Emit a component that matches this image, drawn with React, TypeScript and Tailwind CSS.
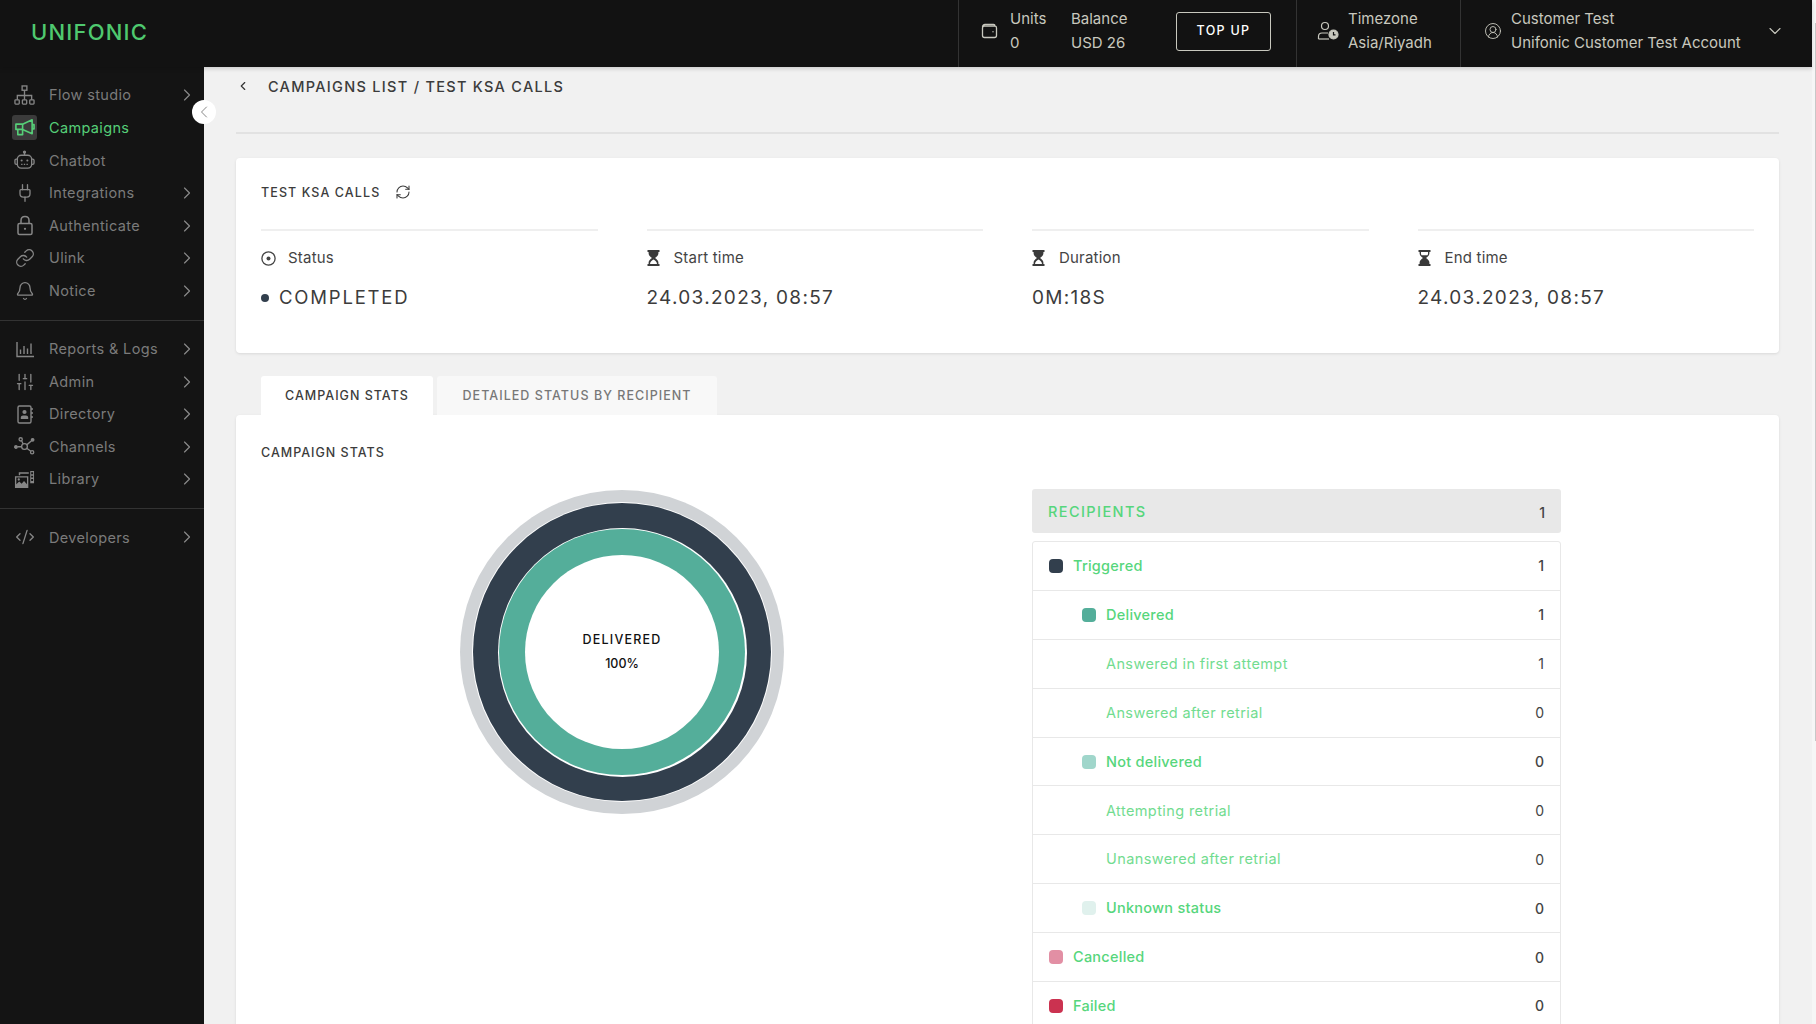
import {
  Bell,
  ChevronDown,
  ChevronLeft,
  ChevronRight,
  CircleUserRound,
  CodeXml,
  Link,
  Plug,
  RefreshCw,
  SlidersVertical,
} from "lucide-react";
import type { ReactNode } from "react";

const FlowIcon = () => (
  <svg width="21" height="21" viewBox="0 0 22 22" fill="none" stroke="currentColor" strokeWidth="1.4">
    <rect x="8.5" y="1" width="5" height="4.5" />
    <path d="M11 5.5V11M3.5 15.5V11H18.5V15.5M11 11V15.5" />
    <rect x="1" y="15.5" width="4.5" height="4.5" rx="0.8" />
    <rect x="8.8" y="15.5" width="4.5" height="4.5" rx="0.8" />
    <rect x="16.5" y="15.5" width="4.5" height="4.5" rx="0.8" />
  </svg>
);

const MegaphoneIcon = () => (
  <svg width="21" height="21" viewBox="0 0 22 22" fill="none" stroke="currentColor" strokeWidth="1.7" strokeLinejoin="round">
    <path d="M2 7.5H9L19 3V17.5L9 13H2Z" />
    <path d="M9 7.5V13M4 13V18.5H9V13" />
    <path d="M19 8H21V12.5H19" />
  </svg>
);

const RobotIcon = () => (
  <svg width="21" height="21" viewBox="0 0 22 22" fill="none" stroke="currentColor" strokeWidth="1.4">
    <rect x="3.5" y="5.5" width="15" height="13.5" rx="4" />
    <path d="M11 5.5V3" />
    <circle cx="11" cy="2.2" r="1" fill="currentColor" />
    <path d="M3.5 9.5H2.5C1.5 9.5 1 10.2 1 11V13.5C1 14.3 1.5 15 2.5 15H3.5M18.5 9.5H19.5C20.5 9.5 21 10.2 21 11V13.5C21 14.3 20.5 15 19.5 15H18.5" />
    <circle cx="8" cy="11" r="1.1" fill="currentColor" stroke="none" />
    <circle cx="14" cy="11" r="1.1" fill="currentColor" stroke="none" />
    <path d="M7.5 15H14.5" strokeDasharray="1.4 1.4" />
  </svg>
);

const LockIcon = () => (
  <svg width="20" height="21" viewBox="0 0 20 21" fill="none" stroke="currentColor" strokeWidth="1.5">
    <rect x="3" y="8.5" width="14" height="11" rx="1.5" />
    <path d="M6 8.5V5.5C6 3 7.8 1.5 10 1.5C12.2 1.5 14 3 14 5.5V8.5" />
    <circle cx="10" cy="13.8" r="1.1" fill="currentColor" stroke="none" />
  </svg>
);

const ReportsIcon = () => (
  <svg width="20" height="20" viewBox="0 0 20 20" fill="none" stroke="currentColor" strokeWidth="1.4">
    <path d="M2 3V17.5H19" />
    <path d="M5.5 15V10.5M9 15V7M12.5 15V9.5M16 15V4.5" />
  </svg>
);

const DirectoryIcon = () => (
  <svg width="20" height="21" viewBox="0 0 20 21" fill="none" stroke="currentColor" strokeWidth="1.4">
    <rect x="3" y="2" width="13" height="17" rx="1.5" />
    <circle cx="9.5" cy="8" r="2.1" fill="currentColor" stroke="none" />
    <path d="M5.8 15V13.6C5.8 12.4 6.8 11.5 8 11.5H11C12.2 11.5 13.2 12.4 13.2 13.6V15Z" fill="currentColor" stroke="none" />
    <path d="M16 5H18M16 9H18M16 13H18" />
  </svg>
);

const ChannelsIcon = () => (
  <svg width="21" height="21" viewBox="0 0 22 22" fill="none" stroke="currentColor" strokeWidth="1.4">
    <circle cx="11" cy="11" r="3" />
    <circle cx="7" cy="3.5" r="1.7" />
    <circle cx="19" cy="17" r="1.7" />
    <circle cx="19.5" cy="4" r="1.3" fill="currentColor" />
    <circle cx="2" cy="11.5" r="1.3" fill="currentColor" />
    <path d="M8 5L9.6 8.4M13.4 12.8L17.6 16M13.3 9.3L18.4 5M3.4 11.3H8" />
  </svg>
);

const LibraryIcon = () => (
  <svg width="21" height="21" viewBox="0 0 22 22" fill="currentColor">
    <path d="M5 3.5H15.5V5H6.5V6.5H5Z" />
    <path fillRule="evenodd" d="M1 7.5H15V20H1ZM2.4 9V16L5.5 13L8 15.5L10.5 12.5L13.6 16V9Z" />
    <circle cx="5" cy="11" r="1.2" />
    <path fillRule="evenodd" d="M17 2H21V15H17ZM18 3.5V5.5H20V3.5ZM18 7V9H20V7ZM18 10.5V12.5H20V10.5Z" />
  </svg>
);

const WalletIcon = () => (
  <svg width="17" height="16" viewBox="0 0 17 16" fill="none" stroke="currentColor" strokeWidth="1.3">
    <path d="M1.5 4C1.5 2.6 2.5 1.5 4 1.5H12.5C13.4 1.5 14 2.1 14 3.2H3.5C2.4 3.2 1.5 4 1.5 5V12.5C1.5 13.6 2.4 14.5 3.5 14.5H13.5C14.6 14.5 15.5 13.6 15.5 12.5V5C15.5 4 14.9 3.2 14 3.2" />
    <circle cx="12" cy="8.8" r="0.7" fill="currentColor" stroke="none" />
  </svg>
);

const TimezoneIcon = () => (
  <svg width="22" height="20" viewBox="0 0 22 20" fill="none" stroke="currentColor" strokeWidth="1.2">
    <circle cx="8" cy="5" r="3.5" />
    <path d="M1.5 18V15.5C1.5 13.5 3 12 5 12H11" />
    <path d="M1.5 18H12" />
    <circle cx="16.5" cy="13.5" r="4.5" fill="currentColor" />
    <path d="M16.5 11V13.8H18.5" stroke="#121212" />
  </svg>
);

const StatusIcon = () => (
  <svg width="15" height="15" viewBox="0 0 15 15" fill="none" stroke="currentColor" strokeWidth="1.3">
    <circle cx="7.5" cy="7.5" r="6.6" />
    <circle cx="7.5" cy="7.5" r="2" fill="currentColor" stroke="none" />
  </svg>
);

const Hourglass = ({ flip }: { flip?: boolean }) => (
  <svg width="13" height="16" viewBox="0 0 13 16" className="text-[#3a3a3a]" fill="currentColor">
    <path
      fillRule="evenodd"
      d="M0.5 0H12.5V2H11.4V3.5C11.4 5.5 9.4 7 8 8C9.4 9 11.4 10.5 11.4 12.5V14H12.5V16H0.5V14H1.6V12.5C1.6 10.5 3.6 9 5 8C3.6 7 1.6 5.5 1.6 3.5V2H0.5Z"
    />
    {flip ? (
      <path fill="#fff" d="M3 2H10V3.6C10 4.2 9.8 4.8 9.4 5.2H3.6C3.2 4.8 3 4.2 3 3.6Z" />
    ) : (
      <path fill="#fff" d="M6.5 9.4C5 10.4 3 11.6 3 14H10C10 11.6 8 10.4 6.5 9.4Z" />
    )}
  </svg>
);

type NavItem = {
  label: string;
  icon: ReactNode;
  arrow?: boolean;
  active?: boolean;
};

const iconProps = { size: 20, strokeWidth: 1.6 };

const topNav: NavItem[] = [
  { label: "Flow studio", icon: <FlowIcon />, arrow: true },
  { label: "Campaigns", icon: <MegaphoneIcon />, active: true },
  { label: "Chatbot", icon: <RobotIcon /> },
  { label: "Integrations", icon: <Plug {...iconProps} />, arrow: true },
  { label: "Authenticate", icon: <LockIcon />, arrow: true },
  { label: "Ulink", icon: <Link {...iconProps} />, arrow: true },
  { label: "Notice", icon: <Bell {...iconProps} />, arrow: true },
];

const midNav: NavItem[] = [
  { label: "Reports & Logs", icon: <ReportsIcon />, arrow: true },
  { label: "Admin", icon: <SlidersVertical {...iconProps} />, arrow: true },
  { label: "Directory", icon: <DirectoryIcon />, arrow: true },
  { label: "Channels", icon: <ChannelsIcon />, arrow: true },
  { label: "Library", icon: <LibraryIcon />, arrow: true },
];

const NavRow = ({ item }: { item: NavItem }) => (
  <div className="flex h-[32.6px] items-center pr-[7px] pl-[12px]">
    <div
      className={`flex h-[25px] w-[25px] items-center justify-center rounded-[3px] ${
        item.active ? "bg-[#3b3b3b] text-[#56cf78]" : "text-[#868686]"
      }`}
    >
      {item.icon}
    </div>
    <span
      className={`ml-[12px] flex-1 text-[14.5px] tracking-[0.35px] ${
        item.active ? "text-[#56cf78]" : "text-[#7b7b7b]"
      }`}
    >
      {item.label}
    </span>
    {item.arrow && <ChevronRight size={20} strokeWidth={1.4} className="text-[#8a8a8a]" />}
  </div>
);

const Sidebar = () => (
  <aside className="relative w-[204px] shrink-0 bg-[#141414]">
    <div className="pt-[12px] pb-[12.5px]">
      {topNav.map((item) => (
        <NavRow key={item.label} item={item} />
      ))}
    </div>
    <div className="border-t border-[#333] pt-[12px] pb-[12.5px]">
      {midNav.map((item) => (
        <NavRow key={item.label} item={item} />
      ))}
    </div>
    <div className="border-t border-[#333] pt-[12px]">
      <NavRow item={{ label: "Developers", icon: <CodeXml {...iconProps} />, arrow: true }} />
    </div>
    <div className="absolute top-[33px] right-[-12px] z-10 flex h-[24px] w-[24px] items-center justify-center rounded-full bg-white">
      <ChevronLeft size={20} strokeWidth={1.2} className="text-[#888]" />
    </div>
  </aside>
);

const Header = () => (
  <header className="relative z-20 flex h-[67px] shrink-0 items-stretch bg-[#121212] text-[#c8c8be] shadow-[0_2px_4px_rgba(0,0,0,0.15)]">
    <div className="flex w-[958px] shrink-0 items-center pb-[3px] pl-[31px]">
      <span className="text-[22px] leading-none font-medium tracking-[1.2px] text-[#4fc96f]">UNIFONIC</span>
    </div>
    <div className="flex w-[338px] shrink-0 items-center border-l border-[#333] pb-[5px] pl-[22px]">
      <WalletIcon />
      <div className="ml-[12px] w-[61px] text-[15px] leading-[24px]">
        <div>Units</div>
        <div>0</div>
      </div>
      <div className="w-[105px] text-[15px] leading-[24px]">
        <div>Balance</div>
        <div>USD 26</div>
      </div>
      <button className="flex h-[39px] w-[95px] items-center justify-center rounded-[3px] border border-[#c8c8be] text-[12.5px] font-medium tracking-[1.3px] text-white">
        TOP UP
      </button>
    </div>
    <div className="flex w-[164px] shrink-0 items-center border-l border-[#333] pb-[5px] pl-[20px]">
      <TimezoneIcon />
      <div className="ml-[9px] text-[15px] leading-[24px]">
        <div>Timezone</div>
        <div>Asia/Riyadh</div>
      </div>
    </div>
    <div className="flex flex-1 items-center border-l border-[#333] pb-[5px] pl-[23px]">
      <CircleUserRound size={18} strokeWidth={1.2} />
      <div className="ml-[9px] flex-1 text-[15px] leading-[24px]">
        <div>Customer Test</div>
        <div>Unifonic Customer Test Account</div>
      </div>
      <ChevronDown size={20} strokeWidth={1.3} className="mr-[27px]" />
    </div>
  </header>
);

const InfoColumn = ({
  icon,
  label,
  value,
  valueClass,
}: {
  icon: ReactNode;
  label: string;
  value: ReactNode;
  valueClass?: string;
}) => (
  <div className="border-t-2 border-[#efefef] pt-[17px]">
    <div className="flex h-[20px] items-center text-[15px] tracking-[0.2px] text-[#444]">
      <div className="flex w-[27px] items-center">{icon}</div>
      {label}
    </div>
    <div className={`mt-[16px] text-[#3c3c3c] ${valueClass ?? "text-[19px] tracking-[1.3px]"}`}>{value}</div>
  </div>
);

type StatRow = {
  label: string;
  value: number;
  swatch?: string;
  level: 0 | 1 | 2;
  bold?: boolean;
};

const statRows: StatRow[] = [
  { label: "Triggered", value: 1, swatch: "bg-[#323f4d]", level: 0, bold: true },
  { label: "Delivered", value: 1, swatch: "bg-[#54ae9a]", level: 1, bold: true },
  { label: "Answered in first attempt", value: 1, level: 2 },
  { label: "Answered after retrial", value: 0, level: 2 },
  { label: "Not delivered", value: 0, swatch: "bg-[#a0d6cb]", level: 1, bold: true },
  { label: "Attempting retrial", value: 0, level: 2 },
  { label: "Unanswered after retrial", value: 0, level: 2 },
  { label: "Unknown status", value: 0, swatch: "bg-[#e0f1ed]", level: 1, bold: true },
  { label: "Cancelled", value: 0, swatch: "bg-[#e28fa4]", level: 0, bold: true },
  { label: "Failed", value: 0, swatch: "bg-[#cb3250]", level: 0, bold: true },
];

const StatRowView = ({ row }: { row: StatRow }) => (
  <div className="flex h-[48.9px] shrink-0 items-center border-b border-[#e8e8e8] pr-[16px] pl-[16px]">
    {row.level === 1 && <div className="w-[33px]" />}
    {row.level === 2 && <div className="w-[57px]" />}
    {row.swatch && <div className={`mr-[10px] h-[14px] w-[14px] rounded-[4px] ${row.swatch}`} />}
    <span
      className={`flex-1 text-[14.5px] ${
        row.bold ? "font-medium tracking-[0.25px] text-[#56d67c]" : "tracking-[0.4px] text-[#72dc90]"
      }`}
    >
      {row.label}
    </span>
    <span className={`text-[14px] text-[#444] ${row.bold ? "font-medium" : ""}`}>{row.value}</span>
  </div>
);

const Donut = () => (
  <div className="relative flex h-[324px] w-[324px] items-center justify-center rounded-full bg-[#d0d3d6]">
    <div className="flex h-[300px] w-[300px] items-center justify-center rounded-full bg-white">
      <div className="flex h-[298px] w-[298px] items-center justify-center rounded-full bg-[#323f4d]">
        <div className="flex h-[249px] w-[249px] items-center justify-center rounded-full bg-white">
          <div className="flex h-[246px] w-[246px] items-center justify-center rounded-full bg-[#54ae9a]">
            <div className="flex h-[194px] w-[194px] flex-col items-center justify-center rounded-full bg-white text-[12.5px] font-medium text-[#111]">
              <span className="tracking-[1.2px]">DELIVERED</span>
              <span className="mt-[5px]">100%</span>
            </div>
          </div>
        </div>
      </div>
    </div>
  </div>
);

export default function App() {
  return (
    <div
      className="flex h-screen overflow-hidden bg-[#f1f1f1]"
      style={{ fontFamily: "Inter, 'Noto Sans', sans-serif" }}
    >
      <div className="flex min-w-0 flex-1 flex-col">
        <Header />
        <div className="flex min-h-0 flex-1">
          <Sidebar />
          <main className="min-w-0 flex-1 overflow-hidden pr-[33px] pl-[32px]">
            <div className="flex h-[67px] items-start border-b-2 border-[#e2e2e2] pt-[9px]">
              <ChevronLeft size={14} strokeWidth={2} className="mt-[3px] text-[#333]" />
              <span className="ml-[18px] text-[14.5px] font-medium tracking-[1.3px] text-[#3c3c3c]">
                CAMPAIGNS LIST / TEST KSA CALLS
              </span>
            </div>

            <section className="mt-[24px] h-[195px] rounded-[4px] bg-white px-[25px] pt-[25px] shadow-[0_1px_3px_rgba(0,0,0,0.1)]">
              <div className="flex h-[20px] items-center text-[12.5px] font-medium tracking-[1.1px] text-[#3c3c3c]">
                TEST KSA CALLS
                <RefreshCw size={16} strokeWidth={1.6} className="ml-[15px] -translate-y-[1px]" />
              </div>
              <div className="mt-[26px] grid grid-cols-4 gap-x-[49px]">
                <InfoColumn
                  icon={<StatusIcon />}
                  label="Status"
                  valueClass="text-[18.5px] tracking-[1.8px]"
                  value={
                    <div className="flex items-center">
                      <span className="mr-[10px] h-[8px] w-[8px] rounded-full bg-[#323f4d]" />
                      COMPLETED
                    </div>
                  }
                />
                <InfoColumn icon={<Hourglass />} label="Start time" value="24.03.2023, 08:57" />
                <InfoColumn icon={<Hourglass />} label="Duration" value="0M:18S" />
                <InfoColumn icon={<Hourglass flip />} label="End time" value="24.03.2023, 08:57" />
              </div>
            </section>

            <div className="mt-[23px] flex gap-[4px] pl-[25px]">
              <div className="flex h-[39px] w-[172px] items-center justify-center rounded-t-[3px] bg-white pt-[2px] text-[12.5px] font-medium tracking-[1px] text-[#3c3c3c]">
                CAMPAIGN STATS
              </div>
              <div className="flex h-[39px] w-[280px] items-center justify-center rounded-t-[3px] bg-[#f8f8f8] pt-[2px] text-[12.5px] font-medium tracking-[1.05px] text-[#777]">
                DETAILED STATUS BY RECIPIENT
              </div>
            </div>

            <section className="h-[800px] rounded-[4px] bg-white px-[25px] pt-[28px] shadow-[0_1px_3px_rgba(0,0,0,0.1)]">
              <h2 className="text-[12.5px] leading-[20px] font-medium tracking-[1px] text-[#3c3c3c]">CAMPAIGN STATS</h2>
              <div className="mt-[26px] flex">
                <div className="ml-[199px] w-[572px] shrink-0 pt-[1px]">
                  <Donut />
                </div>
                <div className="w-[529px]">
                  <div className="flex h-[44px] items-center justify-between rounded-[3px] bg-[#e8e8e8] px-[16px] pt-[2px]">
                    <span className="text-[14.5px] font-medium tracking-[1.4px] text-[#56d67c]">RECIPIENTS</span>
                    <span className="text-[14px] font-medium text-[#444]">1</span>
                  </div>
                  <div className="mt-[8px] flex flex-col rounded-[3px] border border-[#e8e8e8]">
                    {statRows.map((row) => (
                      <StatRowView key={row.label} row={row} />
                    ))}
                  </div>
                </div>
              </div>
            </section>
          </main>
        </div>
      </div>
      <div className="w-[4px] shrink-0 bg-[#f6f6f6] pt-[23px]">
        <div className="ml-[3px] h-[718px] w-[1px] bg-[#c8c8c8]" />
      </div>
    </div>
  );
}
